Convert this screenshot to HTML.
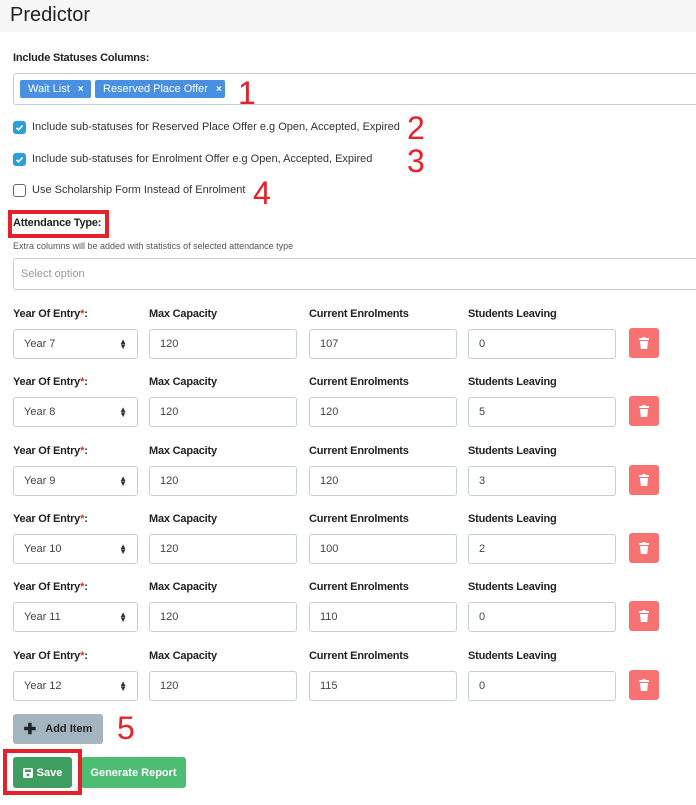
<!DOCTYPE html>
<html><head><meta charset="utf-8"><style>
*{box-sizing:border-box;margin:0;padding:0}
body{width:696px;height:805px;background:#fff;font-family:"Liberation Sans",sans-serif;color:#222;position:relative;overflow:hidden}
.a{position:absolute}
.hdr{left:0;top:0;width:696px;height:32px;background:#f7f7f7}
.lbl{font-size:11px;color:#222;font-weight:600;letter-spacing:-0.2px}
.inp{border:1px solid #c5cfd8;border-radius:3px;background:#fff;font-size:11px;color:#444;padding-left:10px;display:flex;align-items:center}
.tag{background:#4a90e2;color:#fff;font-size:11px;border-radius:2px;height:18px;top:80px;display:flex;align-items:center;padding-left:8px}
.tag span{font-size:10px;font-weight:bold;margin-left:8px}
.red{color:#e8202a;font-size:32px;line-height:1}
.cb{width:13px;height:13px;border-radius:3px;left:13px}
.cbt{left:32px;font-size:11px;color:#333}
.trash{background:#f87272;border-radius:3px;width:30px;height:30px;display:flex;align-items:center;justify-content:center}
.btn{border-radius:3px;font-size:11px;font-weight:bold;color:#fff;display:flex;align-items:center;justify-content:center}
</style></head><body>
<div class="a hdr"></div>
<div class="a" style="left:10px;top:4px;font-size:20px;color:#222">Predictor</div>
<div class="a lbl" style="left:13px;top:52px">Include Statuses Columns:</div>
<div class="a inp" style="left:13px;top:73px;width:700px;height:32px"></div>
<div class="a tag" style="left:20px;width:71px">Wait List<span>×</span></div>
<div class="a tag" style="left:95px;width:130px">Reserved Place Offer<span>×</span></div>
<div class="a red" style="left:238px;top:77px">1</div>

<div class="a cb" style="top:121px;background:#2a9fd8"><svg width="13" height="13"><path d="M3.5 6.8l2 2 4-4.2" stroke="#fff" stroke-width="1.6" fill="none"/></svg></div>
<div class="a cbt" style="top:121px">Include sub-statuses for Reserved Place Offer e.g Open, Accepted, Expired</div>
<div class="a red" style="left:407px;top:112px">2</div>
<div class="a cb" style="top:153px;background:#2a9fd8"><svg width="13" height="13"><path d="M3.5 6.8l2 2 4-4.2" stroke="#fff" stroke-width="1.6" fill="none"/></svg></div>
<div class="a cbt" style="top:153px">Include sub-statuses for Enrolment Offer e.g Open, Accepted, Expired</div>
<div class="a red" style="left:407px;top:145px">3</div>
<div class="a cb" style="top:184px;border:1px solid #5a6b7a"></div>
<div class="a cbt" style="top:184px">Use Scholarship Form Instead of Enrolment</div>
<div class="a red" style="left:253px;top:177px">4</div>

<div class="a" style="left:8px;top:210px;width:101px;height:28px;border:4px solid #e8202a"></div>
<div class="a lbl" style="left:13px;top:217px">Attendance Type:</div>
<div class="a" style="left:13px;top:241px;font-size:9px;color:#555">Extra columns will be added with statistics of selected attendance type</div>
<div class="a inp" style="left:13px;top:258px;width:700px;height:32px;padding-left:7px;color:#999">Select option</div>

<div id="rows"></div>
<script>
var d=[["Year 7","120","107","0"],["Year 8","120","120","5"],["Year 9","120","120","3"],["Year 10","120","100","2"],["Year 11","120","110","0"],["Year 12","120","115","0"]];
var tops=[308,376,445,513,581,650],h="";
d.forEach(function(r,i){var t=tops[i],it=t+21;
h+='<div class="a lbl" style="left:13px;top:'+t+'px">Year Of Entry<span style="color:#c0392b">*</span>:</div>';
h+='<div class="a lbl" style="left:149px;top:'+t+'px">Max Capacity</div>';
h+='<div class="a lbl" style="left:309px;top:'+t+'px">Current Enrolments</div>';
h+='<div class="a lbl" style="left:468px;top:'+t+'px">Students Leaving</div>';
h+='<div class="a inp" style="left:13px;top:'+it+'px;width:125px;height:30px">'+r[0]+'<span style="position:absolute;right:10px;font-size:8px;line-height:5px;color:#333">▲<br>▼</span></div>';
h+='<div class="a inp" style="left:149px;top:'+it+'px;width:148px;height:30px">'+r[1]+'</div>';
h+='<div class="a inp" style="left:309px;top:'+it+'px;width:148px;height:30px">'+r[2]+'</div>';
h+='<div class="a inp" style="left:468px;top:'+it+'px;width:148px;height:30px">'+r[3]+'</div>';
h+='<div class="a trash" style="left:629px;top:'+(it-1)+'px"><svg width="10" height="12"><rect x="0" y="1" width="10" height="2" fill="#fff"/><rect x="3.5" y="0" width="3" height="2" fill="#fff"/><path d="M1 4h8l-0.8 8h-6.4z" fill="#fff"/></svg></div>';
});
document.getElementById('rows').innerHTML=h;
</script>

<div class="a btn" style="left:13px;top:714px;width:90px;height:30px;background:#a5b5c0;color:#222"><span style="font-size:15px;margin-right:9px">✚</span>Add Item</div>
<div class="a red" style="left:117px;top:712px">5</div>
<div class="a btn" style="left:81px;top:757px;width:105px;height:31px;background:#4dbd74">Generate Report</div>
<div class="a btn" style="left:13px;top:757px;width:59px;height:31px;background:#3e9e5f"><svg width="10" height="10" style="margin-right:4px"><rect x="0" y="0" width="10" height="10" rx="1.5" fill="#fff"/><rect x="2" y="1.5" width="6" height="2.5" fill="#3e9e5f"/><circle cx="5" cy="7" r="1.4" fill="#3e9e5f"/></svg>Save</div>
<div class="a" style="left:3px;top:749px;width:79px;height:46px;border:4px solid #e8202a"></div>
</body></html>
